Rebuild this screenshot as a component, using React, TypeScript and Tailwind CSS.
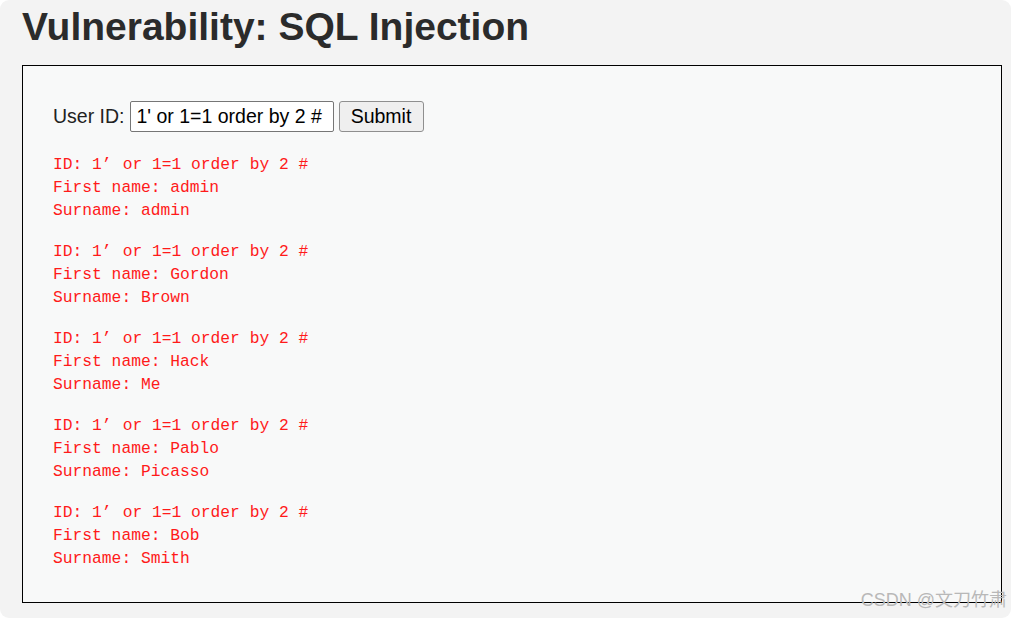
const rows = [
  { first: 'admin', last: 'admin' },
  { first: 'Gordon', last: 'Brown' },
  { first: 'Hack', last: 'Me' },
  { first: 'Pablo', last: 'Picasso' },
  { first: 'Bob', last: 'Smith' },
]

export default function App() {
  return (
    <div className="w-[1012px] h-[618px] bg-white">
      <div className="relative w-[1011px] h-[618px] bg-[#f3f3f3] rounded-[9px] pl-[22px] pt-[3px]">
        <h1
          className="text-[39px] leading-[48px] font-bold text-[#2b2b2b]"
          style={{ fontFamily: '"Liberation Sans", Arial, sans-serif' }}
        >
          Vulnerability: SQL Injection
        </h1>
        <div className="mt-[14px] w-[980px] h-[538px] border border-black bg-[#f8f9f9] pl-[30px] pt-[35px]">
          <form
            className="flex items-center text-[19.5px] text-[#222]"
            style={{ fontFamily: '"Liberation Sans", Arial, sans-serif' }}
            onSubmit={(e) => e.preventDefault()}
          >
            <span>User ID:</span>
            <input
              readOnly
              value="1' or 1=1 order by 2 #"
              className="ml-[5px] w-[204px] h-[31px] px-[6px] bg-white border border-[#767676] rounded-[2px] text-black outline-none"
            />
            <button className="ml-[5px] w-[85px] h-[31px] bg-[#efefef] border border-[#8f8f8f] rounded-[3px] text-black">
              Submit
            </button>
          </form>
          <div
            className="mt-[21px] text-[16.3px] leading-[23px] text-[#ff1a1a]"
            style={{ fontFamily: '"Liberation Mono", "Courier New", monospace' }}
          >
            {rows.map((r, i) => (
              <div key={i} className="mb-[18px]">
                <div>
                  ID: 1<span className="inline-block w-[11px]">’</span> or 1=1 order by 2 #
                </div>
                <div>First name: {r.first}</div>
                <div>Surname: {r.last}</div>
              </div>
            ))}
          </div>
        </div>
        <div
          className="absolute right-[4px] bottom-[4px] text-[18px] text-[#b8b8b8]"
          style={{ fontFamily: '"Liberation Sans", "Noto Sans CJK SC", sans-serif' }}
        >
          CSDN @文刀竹肃
        </div>
      </div>
    </div>
  )
}
